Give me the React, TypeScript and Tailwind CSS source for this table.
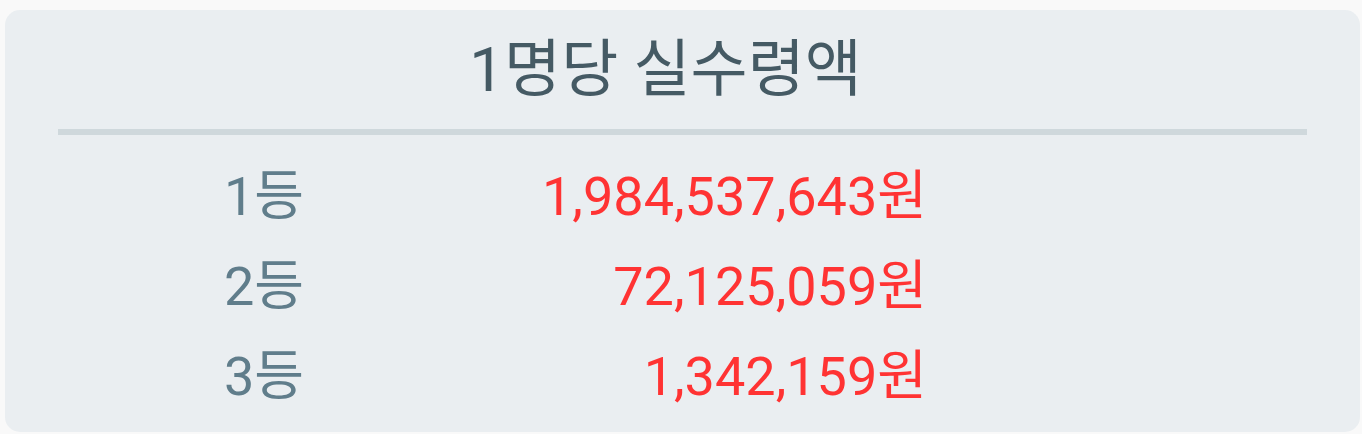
import React from 'react';

const prizes = [
  { rank: '1등', amount: '1,984,537,643원' },
  { rank: '2등', amount: '72,125,059원' },
  { rank: '3등', amount: '1,342,159원' },
];

export default function App() {
  return (
    <div
      className="min-h-[434px] bg-[#f9f9f9] pt-[10px] pl-[5px] pr-[2px] pb-[2px]"
      style={{ fontFamily: 'Roboto, "Noto Sans CJK KR", sans-serif' }}
    >
      <div className="h-[422px] rounded-[15px] bg-[#eaeef1] px-[53px]">
        {/* Title */}
        <div className="flex h-[119px] items-center justify-center pr-[34px] text-[62px] leading-none text-[#455a64]">
          1명당 실수령액
        </div>
        <div className="h-[6px] bg-[#cfd8dc]" />

        {/* Prize rows */}
        <div className="pt-[17px]">
          {prizes.map((p) => (
            <div key={p.rank} className="flex h-[90px] items-center text-[54px] leading-none">
              <div className="w-[246px] text-right text-[#607d8b]">{p.rank}</div>
              <div className="w-[623px] text-right text-[#ff3333]">{p.amount}</div>
            </div>
          ))}
        </div>
      </div>
    </div>
  );
}
